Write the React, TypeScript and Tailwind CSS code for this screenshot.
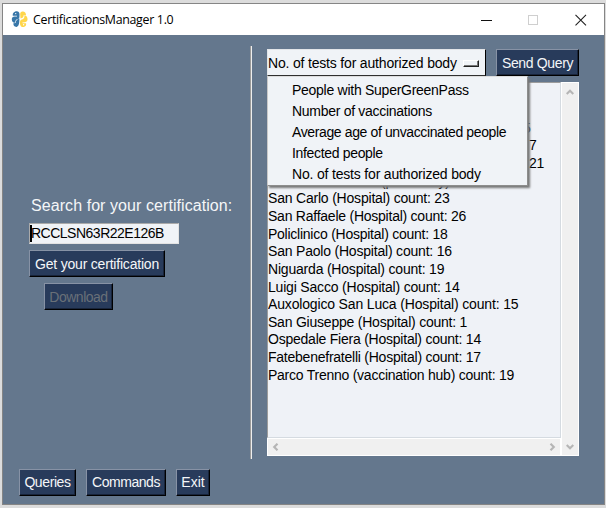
import type { ReactNode } from "react";

type Line = { text: string; cls: string };

const results: Line[] = [
  { text: "", cls: "" },
  { text: "", cls: "" },
  { text: "5", cls: "pl-[255px]" },
  { text: "7", cls: "pl-[261px]" },
  { text: "21", cls: "pl-[261px] tracking-[-0.4px]" },
  { text: "(pharmacy):", cls: "pl-[113px] tracking-[-0.2px]" },
  { text: "San Carlo (Hospital) count: 23", cls: "tracking-[-0.2px]" },
  { text: "San Raffaele (Hospital) count: 26", cls: "tracking-[-0.24px]" },
  { text: "Policlinico (Hospital) count: 18", cls: "tracking-[-0.25px]" },
  { text: "San Paolo (Hospital) count: 16", cls: "tracking-[-0.2px]" },
  { text: "Niguarda (Hospital) count: 19", cls: "tracking-[-0.2px]" },
  { text: "Luigi Sacco (Hospital) count: 14", cls: "tracking-[-0.19px]" },
  { text: "Auxologico San Luca (Hospital) count: 15", cls: "tracking-[-0.16px]" },
  { text: "San Giuseppe (Hospital) count: 1", cls: "tracking-[-0.22px]" },
  { text: "Ospedale Fiera (Hospital) count: 14", cls: "tracking-[-0.23px]" },
  { text: "Fatebenefratelli (Hospital) count: 17", cls: "tracking-[-0.24px]" },
  { text: "Parco Trenno (vaccination hub) count: 19", cls: "tracking-[-0.25px]" },
];

const queries: Line[] = [
  { text: "People with SuperGreenPass", cls: "tracking-[-0.27px]" },
  { text: "Number of vaccinations", cls: "tracking-[-0.29px]" },
  { text: "Average age of unvaccinated people", cls: "tracking-[-0.38px]" },
  { text: "Infected people", cls: "tracking-[-0.33px]" },
  { text: "No. of tests for authorized body", cls: "tracking-[-0.18px]" },
];

function Button({ children, className = "" }: { children: ReactNode; className?: string }) {
  return (
    <button
      className={`flex h-[27px] shrink-0 items-center justify-center border border-t-[#8792a5] border-l-[#8792a5] border-r-black border-b-black bg-[#283b5b] whitespace-nowrap shadow-[inset_-1px_-1px_0_#18243a] ${className}`}
    >
      {children}
    </button>
  );
}

function Chevron({ d }: { d: string }) {
  return (
    <svg width="8" height="8" viewBox="0 0 8 8" fill="none" stroke="#b5b5b5" strokeWidth="2.1">
      <path d={d} />
    </svg>
  );
}

function Logo() {
  return (
    <svg width="17" height="17" viewBox="0 0 17 17" className="ml-[8px]">
      <path
        d="M3.8.8C6.5-.4 8.6.9 8.5 3.4L8.4 6.2C8.3 8 6.7 8.1 5.5 8.4C4.5 8.8 4.4 10 4.2 11.7C2 12 .8 10.3.8 8.3C.8 6.4 2 5.6 3.6 5.5L6 5.4V4.7H1.8C1.4 2.8 2.4 1.4 3.8.8Z"
        fill="#3776a8"
      />
      <path d="M8.4 7.6C8.4 11.9 8.1 15.5 5.5 15.9C3.5 16 2.2 14.6 2.4 12.3L4.7 12.1C4.7 9.8 6 8.4 8.4 7.6Z" fill="#3776a8" />
      <path
        d="M13 .8C10.7-.2 9 .9 9.2 3.4L9.5 7.4C12 7 12.7 5.9 12.6 4.2H15C15 2.4 14.4 1.2 13 .8ZM13.4 4.5C13.7 7 12.4 8 10.7 8.5C9 9 8.9 10.5 9 12.9C9.2 15.6 11.4 16.6 13.4 15.7C15 15 15.4 13.7 15 12.3H11.4V11.6L14 11.2C15.9 10.9 16.7 9.5 16.5 7.7C16.3 5.6 15.2 4.6 13.4 4.5Z"
        fill="#ffd64b"
      />
      <circle cx="4.7" cy="2.6" r=".7" fill="#fff" />
      <circle cx="12.6" cy="13.8" r=".7" fill="#fff" />
    </svg>
  );
}

export default function App() {
  return (
    <div className="h-[508px] w-[606px] overflow-hidden bg-[#dcdcdc] pt-[3px] pl-[2px] font-['Liberation_Sans',Arial,sans-serif] text-[14px] leading-[17px]">
      <div className="flex h-[502px] w-[603px] flex-col border border-[#858585] bg-[#64778d]">
        <header className="flex h-[31px] shrink-0 items-center bg-white">
          <Logo />
          <h1 className="ml-[5px] pb-px font-['Open_Sans',sans-serif] text-[12.4px] tracking-[-0.3px] whitespace-nowrap text-black">
            CertificationsManager 1.0
          </h1>
          <svg width="106" height="12" viewBox="0 0 106 12" className="mr-[17px] ml-auto" fill="none">
            <path d="M0 6.5H11" stroke="#111" />
            <rect x="47.5" y="1.5" width="9" height="9" stroke="#cfcfcf" />
            <path d="M94.5 .8L105 11.3M105 .8L94.5 11.3" stroke="#222" strokeWidth="1.1" />
          </svg>
        </header>

        <main className="flex flex-1">
          <section className="flex w-[247px] shrink-0 flex-col text-[#f4f6f8]">
            <label className="mt-[161px] ml-[28px] text-[16px] leading-[20px] tracking-[0.07px] whitespace-nowrap">
              Search for your certification:
            </label>
            <div className="mt-[7px] ml-[26px] flex h-[21px] w-[150px] items-center border border-t-[#aaa] border-l-[#aaa] border-r-[#e3e3e3] border-b-[#e3e3e3] bg-[#f0f3f7] text-black">
              <span className="h-[17px] w-[2px] bg-black" />
              <span className="-ml-px tracking-[-0.5px] whitespace-nowrap">RCCLSN63R22E126B</span>
            </div>
            <Button className="mt-[6px] ml-[26px] w-[136px] pt-px tracking-[-0.2px]">Get your certification</Button>
            <Button className="mt-[6px] ml-[41px] w-[69px] pt-px tracking-[-0.5px] text-[#697078]">Download</Button>
            <nav className="mt-auto mb-[8px] ml-[16px] flex gap-[10px]">
              <Button className="w-[57px] tracking-[-0.4px]">Queries</Button>
              <Button className="w-[80px] tracking-[-0.45px]">Commands</Button>
              <Button className="w-[34px]">Exit</Button>
            </nav>
          </section>

          <div className="mt-[11px] h-[413px] w-[2px] shrink-0 border-r border-l border-r-[#eeeeee] border-l-[#9a9a9a]" />

          <section className="mt-[14px] ml-[15px] w-[312px] shrink-0">
            <div className="flex justify-between">
              <div className="relative flex h-[27px] w-[219px] items-center border border-t-[#e2e5e8] border-l-[#e2e5e8] border-r-black border-b-[#303030] bg-[#f0f3f7]">
                <span className="pt-px tracking-[-0.18px] whitespace-nowrap">No. of tests for authorized body</span>
                <span className="mt-px mr-[6px] ml-auto h-[7px] w-[16px] shrink-0 border border-t-white border-l-white border-r-[#222] border-b-[#222] bg-[#f0f3f7] shadow-[inset_-1px_-1px_0_#777]" />
                <ul className="absolute top-[26px] -left-px z-10 h-[110px] w-[261px] border border-t-[#dcdcdc] border-l-[#c8c8c8] border-r-[#8d8d8d] border-b-[#8d8d8d] bg-[#f0f3f7] pt-[3.4px] pl-[24px] leading-[20.8px] shadow-[2px_2px_2px_#777]">
                  {queries.map((q) => (
                    <li key={q.text} className={`whitespace-nowrap ${q.cls}`}>
                      {q.text}
                    </li>
                  ))}
                </ul>
              </div>
              <Button className="w-[83px] pt-px tracking-[-0.35px]">
                <span className="text-[#f4f6f8]">Send Query</span>
              </Button>
            </div>

            <div className="mt-[6px] grid h-[374px] grid-cols-[294px_18px] grid-rows-[356px_18px] bg-[#f0f0f0]">
              <div className="overflow-hidden border border-t-[#9c9c9c] border-l-[#9c9c9c] border-r-[#d5dbe1] border-b-[#d5dbe1] bg-[#eff2f7] pt-[1.5px] leading-[17.65px]">
                {results.map((line, i) => (
                  <p key={i} className={`h-[17.65px] whitespace-nowrap ${line.cls}`}>
                    {line.text}
                  </p>
                ))}
              </div>
              <div className="flex flex-col items-center justify-between border-x border-t border-white pt-[5px] pb-[4px]">
                <Chevron d="M.7 6L4 2.7L7.3 6" />
              </div>
              <div className="flex items-center justify-between border border-white px-[4px]">
                <Chevron d="M5.5 .7L2.2 4L5.5 7.3" />
                <Chevron d="M2.5 .7L5.8 4L2.5 7.3" />
              </div>
              <div className="flex items-center justify-center border-x border-b border-white">
                <Chevron d="M.7 2L4 5.3L7.3 2" />
              </div>
            </div>
          </section>
        </main>
      </div>
    </div>
  );
}
